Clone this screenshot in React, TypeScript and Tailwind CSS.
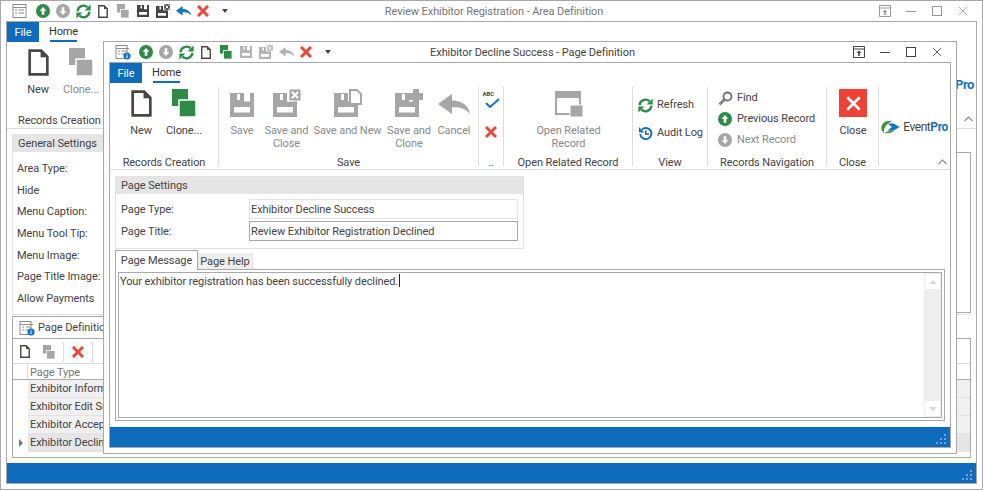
import type { ReactNode } from 'react'

const GRAY = '#a6a6a6'
const GREEN = '#2e8b47'
const RED = '#e8483c'
const SKY = '#1573c4'

function PageIcon({ w = 10, h = 13 }: { w?: number; h?: number }) {
  return (
    <svg width={w} height={h} viewBox="0 0 20 26" className="shrink-0">
      <path d="M1.5 1.5H12.5L18.5 7.5V24.5H1.5Z" fill="#fff" stroke="#4b4644" strokeWidth={h > 20 ? 2.6 : 2.8} />
      <path d="M12 1V8H19Z" fill="#4b4644" />
    </svg>
  )
}

function CloneIcon({ size = 12, color = GRAY }: { size?: number; color?: string }) {
  return (
    <svg width={size} height={(size * 28) / 24} viewBox="0 0 24 28" className="shrink-0">
      <rect x="0" y="0" width="16" height="17" fill={color} />
      <rect x="7" y="11" width="17" height="17" fill={color} stroke="#fff" strokeWidth="1.5" />
    </svg>
  )
}

function SaveIcon({ size = 12, color = GRAY, extra }: { size?: number; color?: string; extra?: 'close' | 'new' | 'clone' }) {
  return (
    <svg width={size} height={size} viewBox={extra ? '0 -4 28 28' : '0 0 24 24'} className="shrink-0">
      <path fillRule="evenodd" d="M0 0H24V24H0ZM14 0V8.5H20V0ZM7 1V7H10V1ZM4 14V19.5H20V14Z" fill={color} />
      {extra === 'close' && (
        <g>
          <rect x="16" y="-4" width="12" height="12" fill={color} stroke="#fff" strokeWidth="1" />
          <path d="M18.8 -1.2L25.2 5.2M25.2 -1.2L18.8 5.2" stroke="#fff" strokeWidth="2" />
        </g>
      )}
      {extra === 'new' && <path d="M16 -3H23L27 1V11H16Z" fill="#fff" stroke={color} strokeWidth="2" />}
      {extra === 'clone' && <path d="M18 -4H24V0H28V7H24V11H18V7H14V0H18Z" fill={color} />}
    </svg>
  )
}

function UndoIcon({ w = 15, color = GRAY }: { w?: number; color?: string }) {
  return (
    <svg width={w} height={(w * 20) / 32} viewBox="0 0 32 20" className="shrink-0">
      <path d="M14 0L0 10L14 20V13.5C22 12.5 28 15 32 20C31 12 24 6.5 14 6.5Z" fill={color} />
    </svg>
  )
}

function XIcon({ size = 12, color = RED, width = 3 }: { size?: number; color?: string; width?: number }) {
  return (
    <svg width={size} height={size} viewBox="0 0 12 12" className="shrink-0">
      <path d="M1 1L11 11M11 1L1 11" stroke={color} strokeWidth={width} fill="none" />
    </svg>
  )
}

function ArrowCircle({ dir, color, size = 14 }: { dir: 'up' | 'down'; color: string; size?: number }) {
  return (
    <svg width={size} height={size} viewBox="0 0 14 14" className="shrink-0">
      <circle cx="7" cy="7" r="7" fill={color} />
      <path d={dir === 'up' ? 'M7 3L10.4 6.8H8.3V10.8H5.7V6.8H3.6Z' : 'M7 11L10.4 7.2H8.3V3.2H5.7V7.2H3.6Z'} fill="#fff" />
    </svg>
  )
}

function RefreshIcon() {
  return (
    <svg width="15" height="15" viewBox="0 0 15 15" className="shrink-0">
      <path d="M1.6 7.2A5.8 5.8 0 0 1 11.5 3.4" fill="none" stroke={GREEN} strokeWidth="2.4" />
      <path d="M8.6 6.4H14.6V.4Z" fill={GREEN} />
      <path d="M13.4 7.8A5.8 5.8 0 0 1 3.5 11.6" fill="none" stroke={GREEN} strokeWidth="2.4" />
      <path d="M6.4 8.6H.4V14.6Z" fill={GREEN} />
    </svg>
  )
}

function AuditIcon() {
  return (
    <svg width="15" height="15" viewBox="0 0 15 15" className="shrink-0">
      <path d="M2.2 8A5.6 5.6 0 1 0 3.8 3.6" fill="none" stroke={SKY} strokeWidth="2" />
      <path d="M1 1V6.4H6.4Z" fill={SKY} />
      <path d="M7.8 4.4V8.2H11" fill="none" stroke="#333" strokeWidth="1.3" />
    </svg>
  )
}

function FindIcon() {
  return (
    <svg width="15" height="15" viewBox="0 0 15 15" className="shrink-0">
      <circle cx="9.5" cy="5.5" r="4" fill="none" stroke="#6e6e6e" strokeWidth="1.8" />
      <path d="M6.5 8.5L1.5 13.5" stroke="#8d8274" strokeWidth="3" />
    </svg>
  )
}

function FormIcon({ info }: { info?: boolean }) {
  return (
    <svg width="16" height="16" viewBox="0 0 16 16" className="shrink-0">
      <rect x="1" y="1.5" width={info ? 11 : 13} height="13" fill="#fff" stroke="#8c8c8c" />
      <path d="M1 4.5H14M3 7H5M6.5 7H12M3 10H5M6.5 10H12" stroke="#8c8c8c" />
      {info && (
        <>
          <circle cx="12" cy="12" r="3.6" fill={SKY} />
          <path d="M12 9.8V10.6M12 11.4V14" stroke="#fff" />
        </>
      )}
    </svg>
  )
}

function PinIcon({ color }: { color: string }) {
  return (
    <svg width="12" height="12" viewBox="0 0 12 12" className="shrink-0">
      <path d="M.5.5H11.5V11.5H.5ZM.5 3H11.5" fill="none" stroke={color} />
      <path d="M6 4.5L8.5 7H6.8V10H5.2V7H3.5Z" fill={color} />
    </svg>
  )
}

function WindowButtons({ color }: { color: string }) {
  return (
    <div className="flex items-center justify-end">
      <div className="flex w-[26px] justify-center"><PinIcon color={color} /></div>
      <div className="flex w-[26px] justify-center"><div className="h-px w-[10px]" style={{ backgroundColor: color }} /></div>
      <div className="flex w-[26px] justify-center"><div className="size-[10px] border" style={{ borderColor: color }} /></div>
      <div className="flex w-[26px] justify-center"><XIcon size={10} color={color} width={1} /></div>
    </div>
  )
}

function Grip({ color = '#6ea5d8' }: { color?: string }) {
  const cells = [0, 0, 1, 0, 1, 1, 1, 1, 1]
  return (
    <div className="grid grid-cols-3 gap-[2px]">
      {cells.map((on, i) => (
        <div key={i} className="size-[2px]" style={{ backgroundColor: on ? color : 'transparent' }} />
      ))}
    </div>
  )
}

function StatusBar() {
  return (
    <div className="flex h-5 shrink-0 items-end justify-end bg-[#0f6cbd] pb-[3px] pr-[4px]">
      <Grip />
    </div>
  )
}

function TabRow() {
  return (
    <div className="flex h-5 shrink-0 items-stretch">
      <div className="flex w-[32px] items-center justify-center bg-[#0f6cbd] pt-[3px] text-white">File</div>
      <div className="ml-[11px] flex w-[27px] flex-col items-center justify-center border-b-2 border-[#0f6cbd] pt-[2px] text-[#333]">Home</div>
    </div>
  )
}

function TitleBar({ title, titleClass, buttons, left }: { title: string; titleClass: string; buttons: string; left: ReactNode }) {
  return (
    <div className="grid h-[20px] shrink-0 grid-cols-[1fr_auto_1fr] items-center pl-[11px] pr-[6px]">
      <div className="flex items-center">{left}</div>
      <div className={`whitespace-nowrap pt-[2px] text-center ${titleClass}`}>{title}</div>
      <WindowButtons color={buttons} />
    </div>
  )
}

function Slot({ children }: { children: ReactNode }) {
  return <div className="flex w-[20px] shrink-0 justify-center">{children}</div>
}

function LargeButton({ w, icon, label, muted }: { w: number; icon: ReactNode; label: ReactNode; muted?: boolean }) {
  return (
    <div className="flex shrink-0 flex-col items-center" style={{ width: w }}>
      <div className="flex h-[33px] items-end justify-center">{icon}</div>
      <div className={`mt-[7px] whitespace-nowrap text-center leading-[13px] ${muted ? 'text-[#8a8a8a]' : 'text-[#444]'}`}>{label}</div>
    </div>
  )
}

function Group({ w, label, children }: { w: number; label: string; children: ReactNode }) {
  return (
    <div className="flex h-[79px] shrink-0 flex-col border-r border-[#dcdcdc]" style={{ width: w }}>
      <div className="-mt-[3px] h-[71px] shrink-0">{children}</div>
      <div className="flex h-[14px] shrink-0 items-center justify-center whitespace-nowrap pt-[2px] text-[#444]">{label}</div>
    </div>
  )
}

function SmallRow({ icon, label, muted }: { icon: ReactNode; label: string; muted?: boolean }) {
  return (
    <div className={`flex items-center gap-[5px] ${muted ? 'text-[#8a8a8a]' : 'text-[#444]'}`}>
      <div className="flex w-[14px] justify-center">{icon}</div>
      <span className="whitespace-nowrap">{label}</span>
    </div>
  )
}

function Logo() {
  return (
    <div className="flex items-center">
      <svg width="22" height="14" viewBox="0 0 24 16" className="shrink-0">
        <path d="M13 1C6 0 1 4 1 9C1 11 2 13 4 15C3 9 7 4 13 1Z" fill="#3f8f3c" />
        <path d="M8 4H15L22 8L15 12H8L13 8Z" fill={SKY} />
        <path d="M4 15C9 16 14 14 16 12H11C9 13 6 14 4 15Z" fill="#3f8f3c" />
      </svg>
      <span className="ml-px text-[12px] tracking-[-0.45px] text-[#444]">Event<span className="font-bold text-[#1573c4]">Pro</span></span>
    </div>
  )
}

function Chevron() {
  return (
    <svg width="9" height="6" viewBox="0 0 9 6">
      <path d="M.5 5L4.5 1L8.5 5" fill="none" stroke="#8c8c8c" strokeWidth="1.2" />
    </svg>
  )
}

function TriangleDown() {
  return <div className="size-0 border-x-[3.5px] border-t-[4px] border-x-transparent border-t-[#444]" />
}

function InnerWindow() {
  return (
    <div className="absolute left-[102px] top-[40px] flex h-[413px] w-[854px] flex-col border border-[#a9a9a9] bg-white">
      <TitleBar
        title="Exhibitor Decline Success - Page Definition"
        titleClass="text-[#444]"
        buttons="#444"
        left={
          <>
            <FormIcon info />
            <div className="ml-[5px] flex items-center">
              <Slot><ArrowCircle dir="up" color={GREEN} /></Slot>
              <Slot><ArrowCircle dir="down" color={GRAY} /></Slot>
              <Slot><RefreshIcon /></Slot>
              <Slot><PageIcon /></Slot>
              <Slot><CloneIcon size={12} color={GREEN} /></Slot>
              <Slot><SaveIcon size={12} color="#b4b4b4" /></Slot>
              <Slot><SaveIcon size={14} color="#b4b4b4" extra="close" /></Slot>
              <Slot><UndoIcon w={15} color="#b4b4b4" /></Slot>
              <Slot><XIcon size={12} /></Slot>
              <div className="ml-[9px]"><TriangleDown /></div>
            </div>
          </>
        }
      />
      <div className="mx-[5px] mb-[5px] flex min-h-0 flex-1 flex-col border border-[#a9a9a9]">
        <TabRow />
        <div className="relative flex h-[87px] shrink-0 border-b border-[#dcdcdc] pt-[4px]">
          <Group w={109} label="Records Creation">
            <div className="flex pl-[6px]">
              <LargeButton w={50} icon={<PageIcon w={21} h={27} />} label="New" />
              <LargeButton w={36} icon={<CloneIcon size={24} color={GREEN} />} label="Clone..." />
            </div>
          </Group>
          <Group w={260} label="Save">
            <div className="flex pl-[2px]">
              <LargeButton w={42} icon={<SaveIcon size={24} />} label="Save" muted />
              <LargeButton w={47} icon={<SaveIcon size={28} extra="close" />} label={<>Save and<br />Close</>} muted />
              <LargeButton w={75} icon={<SaveIcon size={28} extra="new" />} label="Save and New" muted />
              <LargeButton w={48} icon={<SaveIcon size={28} extra="clone" />} label={<>Save and<br />Clone</>} muted />
              <LargeButton w={42} icon={<div className="pb-[3px]"><UndoIcon w={32} /></div>} label="Cancel" muted />
            </div>
          </Group>
          <Group w={25} label="..">
            <div className="flex flex-col items-center pt-[7px]">
              <div className="relative h-[18px] w-[15px]">
                <span className="absolute left-[-1px] top-[-1px] text-[6px] font-bold leading-[8px] text-[#444]">ABC</span>
                <svg width="15" height="10" viewBox="0 0 15 10" className="absolute left-[1px] top-[7px]">
                  <path d="M1 5L5 9L14 1" fill="none" stroke={SKY} strokeWidth="2" />
                </svg>
              </div>
              <div className="mt-[17px]"><XIcon size={12} /></div>
            </div>
          </Group>
          <Group w={129} label="Open Related Record">
            <LargeButton
              w={129}
              muted
              icon={
                <svg width="28" height="26" viewBox="0 0 28 26">
                  <path fillRule="evenodd" d="M0 0H26V24H0ZM2 7V22H24V7Z" fill={GRAY} />
                  <rect x="15" y="14" width="13" height="12" fill={GRAY} stroke="#fff" />
                </svg>
              }
              label={<>Open Related<br />Record</>}
            />
          </Group>
          <Group w={75} label="View">
            <div className="flex flex-col gap-[11.5px] pl-[5px] pt-[13px]">
              <SmallRow icon={<RefreshIcon />} label="Refresh" />
              <SmallRow icon={<AuditIcon />} label="Audit Log" />
            </div>
          </Group>
          <Group w={119} label="Records Navigation">
            <div className="flex flex-col gap-[4.5px] pl-[10px] pt-[6px]">
              <SmallRow icon={<FindIcon />} label="Find" />
              <SmallRow icon={<ArrowCircle dir="up" color={GREEN} />} label="Previous Record" />
              <SmallRow icon={<ArrowCircle dir="down" color={GRAY} />} label="Next Record" muted />
            </div>
          </Group>
          <Group w={52} label="Close">
            <LargeButton
              w={52}
              icon={
                <div className="flex size-[28px] items-center justify-center bg-[#ef4136]">
                  <XIcon size={15} color="#fff" width={2.2} />
                </div>
              }
              label="Close"
            />
          </Group>
          <div className="-mt-[3px] flex h-[79px] w-[70px] justify-center pt-[34px]"><div><Logo /></div></div>
          <div className="absolute bottom-[4px] right-[3px]"><Chevron /></div>
        </div>
        <div className="flex min-h-0 flex-1 flex-col px-[5px] pt-[6px]">
          <div className="w-[409px] shrink-0 border border-[#e2e2e2]">
            <div className="flex h-[17px] items-center bg-[#e5e5e5] pl-[5px] pt-[2px] text-[#444]">Page Settings</div>
            <div className="flex h-[54px] flex-col gap-[2px] pl-[5px] pr-[5px] pt-[5px]">
              <div className="flex items-center">
                <div className="w-[128px] pt-[2px] text-[#444]">Page Type:</div>
                <div className="flex h-[20px] flex-1 items-center border border-[#e2e2e2] pl-px pt-[2px] text-[#444]">Exhibitor Decline Success</div>
              </div>
              <div className="flex items-center">
                <div className="w-[128px] pt-[2px] text-[#444]">Page Title:</div>
                <div className="flex h-[20px] flex-1 items-center border border-[#a9a9a9] pl-px pt-[2px] text-[#444]">Review Exhibitor Registration Declined</div>
              </div>
            </div>
          </div>
          <div className="mt-px flex h-[19px] shrink-0 items-end">
            <div className="relative z-10 -mb-px flex h-[20px] w-[83px] items-center justify-center border border-b-0 border-[#a9a9a9] bg-white pt-[2px] text-[#444]">Page Message</div>
            <div className="flex h-[16px] w-[55px] items-center justify-center border-r border-[#e2e2e2] bg-[#eeeeee] pt-[2px] text-[#444]">Page Help</div>
          </div>
          <div className="flex h-[152px] w-[830px] shrink-0 border border-[#a9a9a9] p-[2px]">
            <div className="flex min-w-0 flex-1 border border-[#a9a9a9]">
              <div className="-mt-[1px] flex-1 pl-px leading-[14px] text-[#444]">
                <span>Your exhibitor registration has been successfully declined.</span>
                <span className="ml-px inline-block h-[13px] w-px translate-y-[2px] bg-[#222]" />
              </div>
              <div className="flex w-[17px] flex-col justify-between bg-[#eeeeee] p-px">
                <div className="flex h-[15px] items-center justify-center bg-white"><div className="size-0 border-x-[4px] border-b-[4px] border-x-transparent border-b-[#d5dcd5]" /></div>
                <div className="flex h-[15px] items-center justify-center bg-white"><div className="size-0 border-x-[4px] border-t-[4px] border-x-transparent border-t-[#d5dcd5]" /></div>
              </div>
            </div>
          </div>
        </div>
        <StatusBar />
      </div>
    </div>
  )
}

const outerRows = ['Area Type:', 'Hide', 'Menu Caption:', 'Menu Tool Tip:', 'Menu Image:', 'Page Title Image:', 'Allow Payments']

const pageRows = ['Exhibitor Information', 'Exhibitor Edit Success', 'Exhibitor Accept Success', 'Exhibitor Decline Success']

export default function App() {
  return (
    <div className="relative flex h-[490px] w-[983px] flex-col overflow-hidden border border-[#a9a9a9] bg-white text-[11px] tracking-[-0.09px] [font-family:Roboto,sans-serif]">
      <TitleBar
        title="Review Exhibitor Registration - Area Definition"
        titleClass="text-[#777]"
        buttons="#999"
        left={
          <>
            <FormIcon />
            <div className="ml-[5px] flex items-center">
              <Slot><ArrowCircle dir="up" color={GREEN} /></Slot>
              <Slot><ArrowCircle dir="down" color={GRAY} /></Slot>
              <Slot><RefreshIcon /></Slot>
              <Slot><PageIcon /></Slot>
              <Slot><CloneIcon size={12} /></Slot>
              <Slot><SaveIcon size={12} color="#444" /></Slot>
              <Slot><SaveIcon size={14} color="#444" extra="close" /></Slot>
              <Slot><UndoIcon w={15} color={SKY} /></Slot>
              <Slot><XIcon size={12} /></Slot>
              <div className="ml-[9px]"><TriangleDown /></div>
            </div>
          </>
        }
      />
      <div className="mx-[5px] mb-[5px] flex min-h-0 flex-1 flex-col border border-[#a9a9a9]">
        <TabRow />
        <div className="relative flex h-[87px] shrink-0 flex-col border-b border-[#dcdcdc] pt-px">
          <div className="flex h-[71px] pl-[6px]">
            <LargeButton w={50} icon={<PageIcon w={21} h={27} />} label="New" />
            <LargeButton w={36} icon={<CloneIcon size={24} />} label="Clone..." muted />
          </div>
          <div className="pl-[11px] pt-px leading-[14px] text-[#444]">Records Creation</div>
          <div className="absolute right-[2px] top-[33px] text-[13px] font-bold tracking-[-0.4px] text-[#1573c4]">Pro</div>
          <div className="absolute bottom-[6px] right-[3px]"><Chevron /></div>
        </div>
        <div className="flex min-h-0 flex-1 flex-col px-[5px] pb-[5px] pt-[5px]">
          <div className="flex h-[181px] shrink-0 flex-col border-b border-l border-[#e2e2e2]">
            <div className="flex h-[18px] w-[400px] shrink-0 items-center bg-[#e5e5e5] pl-[5px] pt-[3px] text-[#444]">General Settings</div>
            <div className="flex min-h-0 flex-1 pb-px">
              <div className="flex w-[100px] flex-col gap-[7.7px] pl-[4px] pt-[10px] text-[#444]">
                {outerRows.map((row) => (
                  <div key={row} className="h-[14px] whitespace-nowrap leading-[14px]">{row}</div>
                ))}
              </div>
              <div className="flex-1 border-y border-r border-[#a9a9a9]" />
            </div>
          </div>
          <div className="mt-px flex min-h-0 flex-1 flex-col border-b border-l border-[#a9a9a9]">
            <div className="flex h-[22px] w-[400px] shrink-0 items-center gap-[3px] border-t border-[#a9a9a9] pl-[6px] text-[#444]">
              <FormIcon info />
              <span className="pt-[2px]">Page Definitions</span>
            </div>
            <div className="flex min-h-0 flex-1 flex-col border-r border-t border-[#a9a9a9]">
              <div className="flex h-[25px] shrink-0 items-center border-b border-[#dcdcdc] pl-[7px] pt-px">
                <PageIcon />
                <div className="ml-[13px]"><CloneIcon size={12} /></div>
                <div className="ml-[8px] h-[20px] w-px bg-[#dcdcdc]" />
                <div className="ml-[8px]"><XIcon size={12} /></div>
                <div className="ml-[8px] h-[20px] w-px bg-[#dcdcdc]" />
              </div>
              <div className="flex h-[16px] shrink-0 border-b border-[#a9a9a9]">
                <div className="w-[15px] border-r border-[#dcdcdc]" />
                <div className="pl-[2px] pt-px leading-[15px] text-[#777]">Page Type</div>
              </div>
              {pageRows.map((row, i) => (
                <div key={row} className="flex h-[18px] shrink-0">
                  <div className="flex w-[15px] items-center justify-center">
                    {i === 3 && <div className="size-0 border-y-[4px] border-l-[4px] border-y-transparent border-l-[#777]" />}
                  </div>
                  <div className={`flex flex-1 items-center border-b border-[#e2e2e2] pl-[2px] pt-[2px] text-[#444] ${i === 3 ? 'bg-[#e5e5e5]' : 'bg-[#f0f0f0]'}`}>{row}</div>
                </div>
              ))}
            </div>
          </div>
        </div>
        <StatusBar />
      </div>
      <InnerWindow />
    </div>
  )
}
